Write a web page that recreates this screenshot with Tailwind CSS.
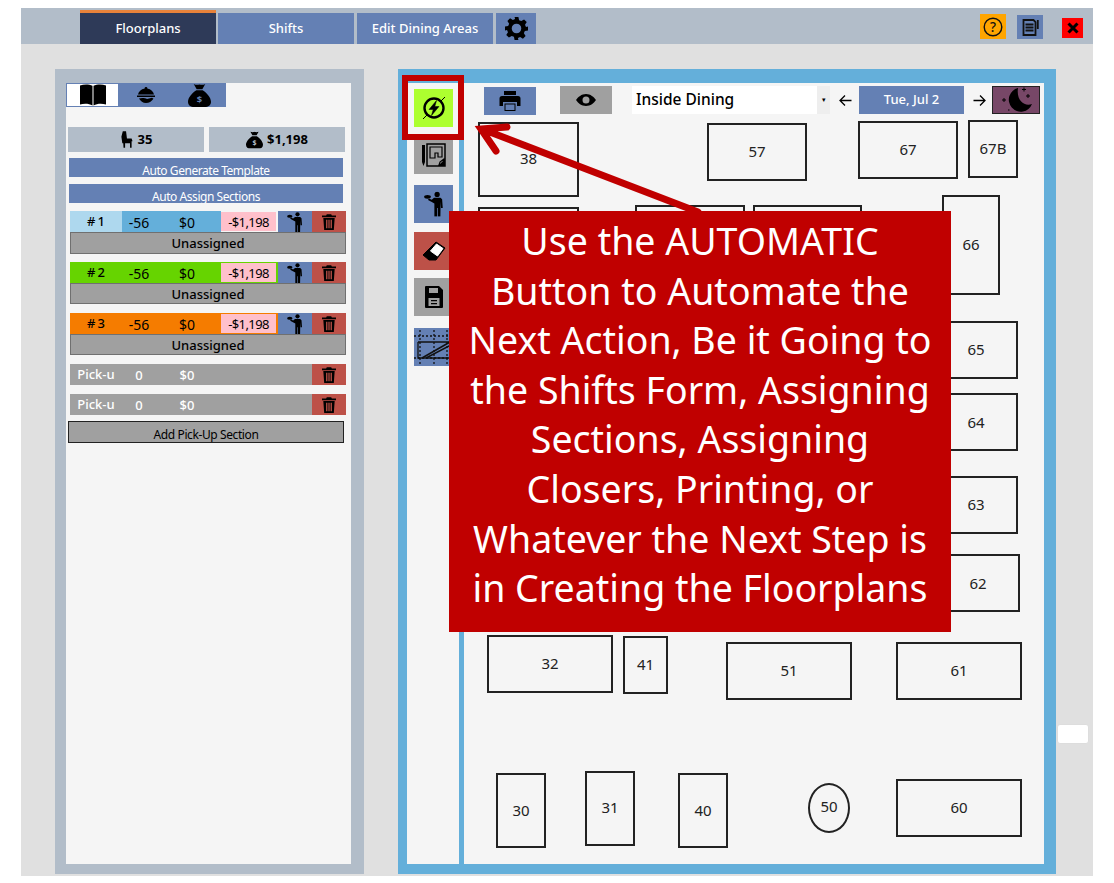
<!doctype html>
<html><head><meta charset="utf-8"><script src="https://cdn.jsdelivr.net/npm/@tailwindcss/browser@4"></script></head>
<body class="bg-white">
<svg class="hidden" width="0" height="0">
<defs>
<symbol id="trash" viewBox="0 0 16 18"><path d="M5.500 0h5l.8 1.600H16v2H0v-2h4.700zM1.500 4.500h13L13.500 18h-11zM4.700 6.500v9.500h1.500V6.500zM7.300 6.500v9.500h1.400V6.500zM9.800 6.500v9.500h1.500V6.500z" fill-rule="evenodd" fill="#000"/></symbol>
<symbol id="waiter" viewBox="0 0 16 20"><circle cx="10.500" cy="2.300" r="2.100"/><path d="M8 5h5.200l1.300 1.200.5 7h-1.400l-.3-5-.2 12h-2.100v-7h-.6v7H8.300V9.500L5.500 8 3.200 6.800l.6-1.200 2.400 1z"/><ellipse cx="2.800" cy="4.200" rx="2.700" ry="1.500"/></symbol>
<symbol id="bag" viewBox="0 0 22 22"><path d="M5.500 0c2 1 3.500 1 5.500.4 2 .6 3.500.6 5.500-.4l-2.800 5H8.300zM8 6h6c4 2.500 8 7 8 11 0 3.500-2.500 5-6 5H6c-3.500 0-6-1.500-6-5 0-4 4-8.500 8-11z"/></symbol>
</defs>
</svg>
<div class="relative w-[1114px] h-[883px] overflow-hidden pt-[8px] pl-[21px] font-['Noto_Sans',sans-serif] text-black">
 <div class="w-[1072px] h-[868px] bg-[#e0e0e0]">
  <!-- top bar -->
  <div class="h-[36px] bg-[#b2bdc9] flex items-end pl-[59px] relative">
   <div class="w-[136px] h-[34px] bg-[#2e3a58] border-t-[3px] border-[#e8823a] flex items-center justify-center text-white text-[13px] font-medium">Floorplans</div>
   <div class="ml-[2px] w-[136px] h-[31px] bg-[#6480b4] flex items-center justify-center text-white text-[13px] font-medium">Shifts</div>
   <div class="ml-[3px] w-[136px] h-[31px] bg-[#6480b4] flex items-center justify-center text-white text-[13px] font-medium">Edit Dining Areas</div>
   <div class="ml-[3px] w-[40px] h-[31px] bg-[#6480b4] flex items-center justify-center">
    <svg width="23" height="25" viewBox="0 0 24 24"><path fill-rule="evenodd" d="M10 0h4l.7 3.300 2.300 1 2.900-1.800 2.800 2.800-1.800 2.900 1 2.300L24 10v4l-3.300.7-1 2.300 1.800 2.900-2.800 2.800-2.900-1.800-2.300 1L14 24h-4l-.7-3.300-2.300-1-2.900 1.800-2.800-2.800 1.800-2.900-1-2.300L0 14v-4l3.300-.7 1-2.300L2.500 4.100l2.800-2.800L8.200 3.100l2.300-1zM12 7a5 5 0 1 0 0 10 5 5 0 0 0 0-10z"/></svg>
   </div>
   <div class="absolute left-[959px] top-[6px] w-[26px] h-[25px] bg-[#ffa500] flex items-center justify-center">
    <svg width="20" height="20" viewBox="0 0 20 20"><circle cx="10" cy="10" r="8.800" fill="none" stroke="#111" stroke-width="1.400"/><text x="10" y="14.800" text-anchor="middle" font-size="13.500" font-weight="500" font-family="Noto Sans" fill="#111">?</text></svg>
   </div>
   <div class="absolute left-[996px] top-[7px] w-[26px] h-[24px] bg-[#6480b4] flex items-center justify-center">
    <svg width="17" height="17" viewBox="0 0 17 17" fill="none" stroke="#111" stroke-width="1.800"><path d="M1.500 1h10l2 2v13h-12zM3.500 5.500h8M3.500 8.500h8M3.500 11.500h8M15.800 1v9"/></svg>
   </div>
   <div class="absolute left-[1041px] top-[10px] w-[21px] h-[20px] bg-[#ff0000] flex items-center justify-center">
    <svg width="12" height="12" viewBox="0 0 12 12"><path d="M1.500 1.500l9 9M10.500 1.500l-9 9" stroke="#000" stroke-width="3"/></svg>
   </div>
  </div>
  <!-- content -->
  <div class="flex pl-[34px] pt-[25px] items-start">
   <!-- left panel -->
   <div class="w-[309px] h-[805px] bg-[#b2bdc9] pl-[11px] pt-[14px]">
    <div class="w-[285px] h-[781px] bg-[#f5f5f5]">
     <div class="flex h-[24px]">
      <div class="w-[53px] bg-white border border-[#6480b4] flex items-center justify-center">
       <svg width="26" height="22" viewBox="0 0 26 22"><path d="M0 1.500C4 .2 9 .2 12.500 1.800v19.700C9 19.500 4 19.500 0 20.500zM26 1.500C22 .2 17 .2 13.500 1.800v19.700c3.500-2 8.500-2 12.500-1z"/></svg>
      </div>
      <div class="w-[107px] bg-[#6480b4] flex items-center pl-[18px]">
       <svg width="18" height="16" viewBox="0 0 18 16"><path d="M9 0a1.300 1.300 0 0 1 1.300 1.500C14 2.200 16.500 4.500 17 7.500H1C1.500 4.500 4 2.200 7.700 1.500A1.300 1.300 0 0 1 9 0zM0 8.500h18V10H0zM2 11.500c3-1 6-.5 8 .5l5-1.300 1.500 1C14.500 14.500 12 16 9 16c-3 0-5.500-2-7-4.500z"/></svg>
       <svg class="ml-[33px]" width="23" height="23" viewBox="0 0 22 22"><use href="#bag"/><text x="11" y="18" text-anchor="middle" font-size="9" font-weight="700" font-family="Noto Sans" fill="#6480b4">$</text></svg>
      </div>
     </div>
     <div class="flex mt-[20px] pl-[2px] gap-[5px]">
      <div class="w-[136px] h-[25px] bg-[#b2bdc9] flex items-center justify-center gap-[5px] text-[13px] font-bold">
       <svg width="13" height="17" viewBox="0 0 14 18"><path d="M3 0h3.500l1 8h5l1 3h-1v7h-1.700v-5H5.500v5H3.800l-.3-5h-1L1.500 6z"/></svg>35</div>
      <div class="w-[136px] h-[25px] bg-[#b2bdc9] flex items-center justify-center gap-[4px] text-[13px] font-bold">
       <svg width="17" height="18" viewBox="0 0 22 22"><use href="#bag"/><text x="11" y="18" text-anchor="middle" font-size="9" font-weight="700" font-family="Noto Sans" fill="#b2bdc9">$</text></svg>$1,198</div>
     </div>
     <div class="ml-[3px] w-[274px] h-[19px] mt-[6px] bg-[#6480b4] overflow-hidden text-white text-[12px] tracking-[-0.45px] text-center leading-[16px] pt-[5px]">Auto Generate Template</div>
     <div class="ml-[3px] w-[274px] h-[19px] mt-[7px] bg-[#6480b4] overflow-hidden text-white text-[12px] tracking-[-0.45px] text-center leading-[16px] pt-[5px]">Auto Assign Sections</div>

     <!-- section 1 -->
     <div class="ml-[4px] w-[276px] mt-[8px] text-[13px]">
      <div class="flex h-[21px] items-stretch">
       <div class="w-[52px] bg-[#aed8ee] flex items-center justify-center font-medium pt-[1px]">#&#8201;1</div>
       <div class="w-[99px] bg-[#64afda] flex items-center text-[14px] pt-[2px]"><span class="w-[34px] text-center">-56</span><span class="w-[62px] text-center">$0</span></div>
       <div class="w-[55px] my-[1px] bg-[#ffc0cb] flex items-center justify-center tracking-[-0.6px] pt-[2px]">-$1,198</div>
       <div class="ml-[2px] w-[34px] bg-[#6480b4] flex items-center justify-center"><svg width="16" height="20" viewBox="0 0 16 20"><use href="#waiter"/></svg></div>
       <div class="w-[34px] bg-[#bd5148] flex items-center justify-center"><svg width="14" height="18"><use href="#trash"/></svg></div>
      </div>
      <div class="h-[22px] bg-[#a0a0a0] border border-[#707070] flex items-center justify-center font-medium pt-[2px]">Unassigned</div>
     </div>
     <!-- section 2 -->
     <div class="ml-[4px] w-[276px] mt-[8px] text-[13px]">
      <div class="flex h-[21px] items-stretch bg-[#66d400]">
       <div class="w-[52px] flex items-center justify-center font-medium pt-[1px]">#&#8201;2</div>
       <div class="w-[99px] flex items-center text-[14px] pt-[2px]"><span class="w-[34px] text-center">-56</span><span class="w-[62px] text-center">$0</span></div>
       <div class="w-[55px] my-[1px] bg-[#ffc0cb] flex items-center justify-center tracking-[-0.6px] pt-[2px]">-$1,198</div>
       <div class="ml-[2px] w-[34px] bg-[#6480b4] flex items-center justify-center"><svg width="16" height="20" viewBox="0 0 16 20"><use href="#waiter"/></svg></div>
       <div class="w-[34px] bg-[#bd5148] flex items-center justify-center"><svg width="14" height="18"><use href="#trash"/></svg></div>
      </div>
      <div class="h-[21px] bg-[#a0a0a0] border border-[#707070] flex items-center justify-center font-medium pt-[2px]">Unassigned</div>
     </div>
     <!-- section 3 -->
     <div class="ml-[4px] w-[276px] mt-[9px] text-[13px]">
      <div class="flex h-[21px] items-stretch bg-[#f57c00]">
       <div class="w-[52px] flex items-center justify-center font-medium pt-[1px]">#&#8201;3</div>
       <div class="w-[99px] flex items-center text-[14px] pt-[2px]"><span class="w-[34px] text-center">-56</span><span class="w-[62px] text-center">$0</span></div>
       <div class="w-[55px] my-[1px] bg-[#ffc0cb] flex items-center justify-center tracking-[-0.6px] pt-[2px]">-$1,198</div>
       <div class="ml-[2px] w-[34px] bg-[#6480b4] flex items-center justify-center"><svg width="16" height="20" viewBox="0 0 16 20"><use href="#waiter"/></svg></div>
       <div class="w-[34px] bg-[#bd5148] flex items-center justify-center"><svg width="14" height="18"><use href="#trash"/></svg></div>
      </div>
      <div class="h-[21px] bg-[#a0a0a0] border border-[#707070] flex items-center justify-center font-medium pt-[2px]">Unassigned</div>
     </div>
     <!-- pick-ups -->
     <div class="ml-[4px] w-[276px] mt-[9px] h-[21px] flex bg-[#a0a0a0] text-white text-[13px] items-center font-medium">
      <span class="w-[52px] text-center">Pick-u</span><span class="w-[34px] text-center pt-[2px]">0</span><span class="w-[62px] text-center pt-[2px]">$0</span>
      <div class="ml-auto w-[34px] h-full bg-[#bd5148] flex items-center justify-center"><svg width="14" height="18"><use href="#trash"/></svg></div>
     </div>
     <div class="ml-[4px] w-[276px] mt-[9px] h-[21px] flex bg-[#a0a0a0] text-white text-[13px] items-center font-medium">
      <span class="w-[52px] text-center">Pick-u</span><span class="w-[34px] text-center pt-[2px]">0</span><span class="w-[62px] text-center pt-[2px]">$0</span>
      <div class="ml-auto w-[34px] h-full bg-[#bd5148] flex items-center justify-center"><svg width="14" height="18"><use href="#trash"/></svg></div>
     </div>
     <div class="ml-[2px] w-[276px] mt-[6px] h-[22px] bg-[#a0a0a0] border border-[#222] overflow-hidden text-[12px] tracking-[-0.4px] text-center leading-[16px] pt-[5px]">Add Pick-Up Section</div>
    </div>
   </div>
   <!-- right panel -->
   <div class="ml-[34px] w-[658px] h-[805px] bg-[#64afda] pl-[9px] pt-[14px] flex gap-[5px]">
    <div class="w-[52px] h-[781px] bg-[#f5f5f5] pl-[7px] relative">
     <div class="mt-[6px] w-[39px] h-[38px] bg-[#adff2f] flex items-center justify-center">
      <svg width="28" height="28" viewBox="0 0 28 28"><circle cx="14" cy="14" r="9.500" fill="none" stroke="#000" stroke-width="2.400"/><path d="M16.500 6.500L9 15.500h4.200L11.500 21.500l7.500-9h-4.200z" stroke="#000" stroke-width=".5"/><path d="M25 3L21 7M3 25l4-4" stroke="#000" stroke-width="1"/></svg>
     </div>
     <div class="mt-[9px] w-[39px] h-[38px] bg-[#a0a0a0] flex items-center justify-center">
      <svg width="26" height="26" viewBox="0 0 26 26"><path d="M1 3h3v17l-1.500 4L1 20z"/><path d="M6 2h18v22H6z" fill="none" stroke="#000" stroke-width="1.500"/><path d="M9 5h12v10h-4v-4h-3v5h-5zM19 20l4-3v6h-5z" fill="none" stroke="#000" stroke-width="1.200"/><path d="M17 24l7-7v7z"/></svg>
     </div>
     <div class="mt-[11px] w-[39px] h-[38px] bg-[#6480b4] flex items-center justify-center">
      <svg width="20" height="26" viewBox="0 0 16 20"><use href="#waiter"/></svg>
     </div>
     <div class="mt-[9px] w-[39px] h-[38px] bg-[#bd5148] flex items-center justify-center">
      <svg width="24" height="20" viewBox="0 0 24 20"><path d="M14 1l9 6-9 12H7L1 14z" fill="#000" stroke="#000" stroke-linejoin="round"/><path d="M14.500 3l6.500 4.500-5.500 7.500-7-5z" fill="#fff" stroke="#fff" stroke-linejoin="round"/></svg>
     </div>
     <div class="mt-[8px] w-[39px] h-[38px] bg-[#a0a0a0] flex items-center justify-center">
      <svg width="20" height="24" viewBox="0 0 20 24"><path fill-rule="evenodd" d="M2 1h13l4 4v17a1 1 0 0 1-1 1H2a1 1 0 0 1-1-1V2a1 1 0 0 1 1-1zM5 3v5h9V3zM4.500 13v8h11v-8zM7 15h6v1.300H7zM7 18h6v1.300H7z"/></svg>
     </div>
     <div class="mt-[12px] w-[39px] h-[38px] bg-[#6480b4] overflow-hidden">
      <svg width="39" height="38" viewBox="0 0 39 38" fill="none" stroke="#111"><path d="M0 8h39M0 30h39M6 2v34M20 2v34M33 2v34" stroke-dasharray="2 2" stroke-width="1.300"/><path d="M4 14h35M4 14v16h35" stroke-width="1.300"/><path d="M8 30L36 14M12 30L39 16" stroke-width="1.500"/></svg>
     </div>
    </div>
    <!-- main canvas -->
    <div class="w-[580px] h-[781px] bg-[#f5f5f5] relative text-[15px] text-[#222]">
     <div class="absolute left-[20px] top-[4px] w-[52px] h-[28px] bg-[#6480b4] flex items-center justify-center">
      <svg width="22" height="22" viewBox="0 0 22 22"><path fill-rule="evenodd" d="M5 1h12v4H5zM3 6h16a2.500 2.500 0 0 1 2.500 2.500V16H18v-4H4v4H.5V8.500A2.500 2.500 0 0 1 3 6zM5.500 13.500h11V21h-11z"/><rect x="6.500" y="14.500" width="9" height="5.500" fill="#6480b4"/></svg>
     </div>
     <div class="absolute left-[96px] top-[3px] w-[52px] h-[28px] bg-[#a0a0a0] flex items-center justify-center">
      <svg width="20" height="12" viewBox="0 0 20 12"><path fill-rule="evenodd" d="M10 0c4.500 0 8 3 10 6-2 3-5.500 6-10 6S2 9 0 6c2-3 5.500-6 10-6zM10 2.500a3.500 3.500 0 1 0 0 7 3.500 3.500 0 0 0 0-7z"/></svg>
     </div>
     <div class="absolute left-[168px] top-[3px] w-[198px] h-[28px] bg-white flex items-center pl-[4px] text-[15.500px] font-medium text-black">Inside Dining<div class="absolute right-0 top-0 w-[13px] h-full bg-[#eeeeee] flex items-center justify-center text-[7px]">&#9662;</div></div>
     <svg class="absolute left-[375px] top-[11px]" width="13" height="13" viewBox="0 0 13 13" fill="none" stroke="#000" stroke-width="1.300"><path d="M12.500 6.500H1M6 1.500l-5 5 5 5"/></svg>
     <div class="absolute left-[395px] top-[3px] w-[105px] h-[28px] bg-[#6480b4] flex items-center justify-center text-white text-[13px] font-medium">Tue, Jul 2</div>
     <svg class="absolute left-[509px] top-[11px]" width="13" height="13" viewBox="0 0 13 13" fill="none" stroke="#000" stroke-width="1.300"><path d="M.5 6.500H12M7 1.500l5 5-5 5"/></svg>
     <div class="absolute left-[528px] top-[3px] w-[48px] h-[28px] bg-[#774767] border border-[#222] overflow-hidden">
      <svg width="46" height="26" viewBox="0 0 46 26"><path d="M25 1A12 12 0 1 0 39 17C32 20 23 14 25 1z"/><path d="M9 13h4M11 11v4M29 2.500h4M31 .5v4M33 9h4M35 7v4M15 23h1.500" stroke="#000" stroke-width="1"/></svg>
     </div>

     <div class="absolute left-[14px] top-[39px] w-[101px] h-[75px] pb-[2px] border-2 border-[#222] flex items-center justify-center">38</div>
     <div class="absolute left-[243px] top-[40px] w-[100px] h-[58px] pb-[2px] border-2 border-[#222] flex items-center justify-center">57</div>
     <div class="absolute left-[394px] top-[38px] w-[100px] h-[58px] pb-[2px] border-2 border-[#222] flex items-center justify-center">67</div>
     <div class="absolute left-[504px] top-[37px] w-[50px] h-[58px] pb-[2px] border-2 border-[#222] flex items-center justify-center">67B</div>
     <div class="absolute left-[14px] top-[124px] w-[101px] h-[58px] border-2 border-[#222]"></div>
     <div class="absolute left-[171px] top-[122px] w-[110px] h-[58px] border-2 border-[#222]"></div>
     <div class="absolute left-[289px] top-[122px] w-[109px] h-[58px] border-2 border-[#222]"></div>
     <div class="absolute left-[478px] top-[112px] w-[58px] h-[100px] pb-[2px] border-2 border-[#222] flex items-center justify-center">66</div>
     <div class="absolute left-[470px] top-[238px] w-[84px] h-[58px] pb-[2px] border-2 border-[#222] flex items-center justify-center">65</div>
     <div class="absolute left-[470px] top-[310px] w-[84px] h-[58px] border-2 border-[#222] flex items-center justify-center">64</div>
     <div class="absolute left-[470px] top-[393px] w-[84px] h-[58px] pb-[2px] border-2 border-[#222] flex items-center justify-center">63</div>
     <div class="absolute left-[472px] top-[471px] w-[84px] h-[58px] border-2 border-[#222] flex items-center justify-center">62</div>
     <div class="absolute left-[23px] top-[552px] w-[126px] h-[58px] pb-[2px] border-2 border-[#222] flex items-center justify-center">32</div>
     <div class="absolute left-[159px] top-[553px] w-[45px] h-[58px] pb-[2px] border-2 border-[#222] flex items-center justify-center">41</div>
     <div class="absolute left-[262px] top-[559px] w-[126px] h-[58px] pb-[2px] border-2 border-[#222] flex items-center justify-center">51</div>
     <div class="absolute left-[432px] top-[559px] w-[126px] h-[58px] pb-[2px] border-2 border-[#222] flex items-center justify-center">61</div>
     <div class="absolute left-[32px] top-[690px] w-[50px] h-[75px] border-2 border-[#222] flex items-center justify-center">30</div>
     <div class="absolute left-[121px] top-[688px] w-[50px] h-[75px] pb-[2px] border-2 border-[#222] flex items-center justify-center">31</div>
     <div class="absolute left-[214px] top-[690px] w-[50px] h-[75px] border-2 border-[#222] flex items-center justify-center">40</div>
     <div class="absolute left-[344px] top-[700px] w-[42px] h-[50px] pb-[3px] border-2 border-[#222] rounded-[50%] flex items-center justify-center">50</div>
     <div class="absolute left-[432px] top-[696px] w-[126px] h-[58px] pb-[2px] border-2 border-[#222] flex items-center justify-center">60</div>
    </div>
   </div>
  </div>
 </div>
 <!-- floating white button -->
 <div class="absolute left-[1057px] top-[724px] w-[32px] h-[20px] bg-white border border-[#ddd] rounded-[3px]"></div>
 <!-- annotation: highlight -->
 <div class="absolute left-[402px] top-[75px] w-[62px] h-[65px] border-[6px] border-[#c00000]"></div>
 <!-- annotation: arrow -->
 <svg class="absolute left-0 top-0 pointer-events-none" width="1114" height="883" fill="none" stroke="#c00000" stroke-width="7" stroke-linecap="round"><path d="M698 212L482 129M507 127L481 129L496 151"/></svg>
 <!-- annotation: callout -->
 <div class="absolute left-[449px] top-[211px] w-[502px] h-[421px] bg-[#c00000] text-white text-[37.500px] leading-[49.600px] text-center pt-[5px] font-['Noto_Sans',sans-serif]">Use the AUTOMATIC<br>Button to Automate the<br>Next Action, Be it Going to<br>the Shifts Form, Assigning<br>Sections, Assigning<br>Closers, Printing, or<br>Whatever the Next Step is<br>in Creating the Floorplans</div>
</div>
</body></html>
